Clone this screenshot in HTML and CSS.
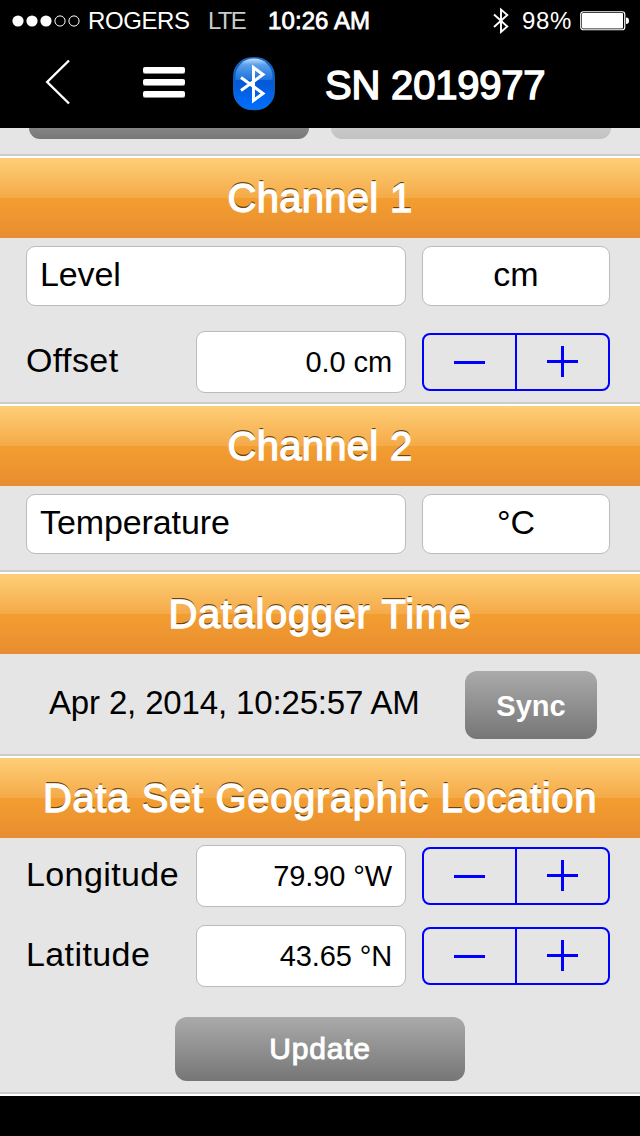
FILE: index.html
```html
<!DOCTYPE html>
<html lang="en">
<head>
    <meta charset="UTF-8">
    <meta name="viewport" content="width=device-width, initial-scale=1.0">
    <title>SN 2019977</title>
    <link rel="stylesheet" href="styles.css">
</head>
<body>

    <div class="status-bar">
        <svg class="signal" width="68" height="12" viewBox="0 0 68 12">
            <g fill="#fff">
                <circle cx="6" cy="6" r="5.6"/>
                <circle cx="20" cy="6" r="5.6"/>
                <circle cx="34" cy="6" r="5.6"/>
            </g>
            <g fill="none" stroke="#fff" stroke-width="1">
                <circle cx="48" cy="6" r="5.1"/>
                <circle cx="62" cy="6" r="5.1"/>
            </g>
        </svg>
        <span class="carrier">ROGERS</span>
        <span class="network">LTE</span>
        <span class="clock">10:26 AM</span>
        <svg class="bt-small" width="16" height="28" viewBox="0 0 16 28">
            <path d="M1 7.5 L14.3 19.5 L8 25 L8 2.5 L14.3 8 L1 20" fill="none" stroke="#fff" stroke-width="1.9"/>
        </svg>
        <span class="percent">98%</span>
        <svg class="battery" width="50" height="20" viewBox="0 0 50 20">
            <rect x=".75" y=".75" width="44" height="18" rx="2.5" fill="none" stroke="#fff" stroke-width="1.2"/>
            <rect x="2" y="2" width="41" height="15.5" rx="1" fill="#fff"/>
            <path d="M46 6.5 Q49 6.5 49 9.8 Q49 13 46 13 Z" fill="#fff"/>
        </svg>
    </div>

    <div class="nav-bar">
        <svg class="back" width="26" height="46" viewBox="0 0 26 46">
            <path d="M24 1.5 L2.2 23 L24 44.5" fill="none" stroke="#fff" stroke-width="2.4"/>
        </svg>
        <div class="menu">
            <span></span>
            <span></span>
            <span></span>
        </div>
        <svg class="bt-logo" width="42" height="54" viewBox="0 0 42 54">
            <defs>
                <linearGradient id="btBlue" x1="0" y1="0" x2="0" y2="1">
                    <stop offset="0" stop-color="#1560c0"/>
                    <stop offset=".5" stop-color="#0459d8"/>
                    <stop offset="1" stop-color="#0070ff"/>
                </linearGradient>
                <linearGradient id="btShine" x1="0" y1="0" x2="0" y2="1">
                    <stop offset="0" stop-color="#c4defa"/>
                    <stop offset=".3" stop-color="#5a9fea"/>
                    <stop offset="1" stop-color="#1d72dc"/>
                </linearGradient>
            </defs>
            <rect x=".7" y=".7" width="40.6" height="52" rx="18" fill="url(#btBlue)" stroke="#1c6cc4" stroke-width="1"/>
            <path d="M2.5 23 V19 A18.5 17.5 0 0 1 39.5 19 V23 Z" fill="url(#btShine)"/>
            <path d="M8 20.5 L30 36.5 L20.5 43.5 L20.5 10.5 L30 17.5 L8 33.5" fill="none" stroke="#fff" stroke-width="3"/>
        </svg>
        <h1>SN 2019977</h1>
    </div>

    <div class="tabs">
        <div class="tab"></div>
        <div class="tab tab-light"></div>
    </div>

    <h2>Channel 1</h2>
    <div class="panel channel-one">
        <div class="row">
            <div class="field name">Level</div>
            <div class="field unit">cm</div>
        </div>
        <div class="row value-row">
            <label>Offset</label>
            <div class="field value">0.0 cm</div>
            <div class="stepper">
                <button class="minus"></button>
                <button class="plus"></button>
            </div>
        </div>
    </div>

    <h2>Channel 2</h2>
    <div class="panel channel-two">
        <div class="row">
            <div class="field name">Temperature</div>
            <div class="field unit">°C</div>
        </div>
    </div>

    <h2 class="wide">Datalogger Time</h2>
    <div class="panel time">
        <span class="date">Apr 2, 2014, 10:25:57 AM</span>
        <button class="btn sync">Sync</button>
    </div>

    <h2 class="wide">Data Set Geographic Location</h2>
    <div class="panel location">
        <div class="row value-row">
            <label>Longitude</label>
            <div class="field value">79.90 °W</div>
            <div class="stepper">
                <button class="minus"></button>
                <button class="plus"></button>
            </div>
        </div>
        <div class="row value-row">
            <label>Latitude</label>
            <div class="field value">43.65 °N</div>
            <div class="stepper">
                <button class="minus"></button>
                <button class="plus"></button>
            </div>
        </div>
        <button class="btn update">Update</button>
    </div>

</body>
</html>
```
FILE: styles.css
```css
* {
    box-sizing: border-box;
}
body {
    margin: 0;
    width: 640px;
    height: 1136px;
    overflow: hidden;
    background-color: #000;
    color: #000;
    font-family: "Liberation Sans", Arial, sans-serif;
}
button {
    margin: 0;
    padding: 0;
    border: none;
    background: none;
    font-family: inherit;
}

/* status bar */
.status-bar {
    display: flex;
    align-items: center;
    height: 40px;
    padding: 1px 0 0 12px;
    color: #fff;
    font-size: 24px;
    white-space: nowrap;
}
.status-bar svg {
    flex: none;
}
.carrier {
    width: 120px;
    padding-left: 8px;
    letter-spacing: -0.4px;
}
.network {
    width: 67px;
    padding-left: 8px;
    letter-spacing: -1.8px;
    color: #ccc;
}
.clock {
    width: 226px;
    padding-left: 1px;
    letter-spacing: 0.1px;
    -webkit-text-stroke: 0.8px #fff;
}
.percent {
    width: 58px;
    margin-left: 13px;
    letter-spacing: 0.6px;
}

/* navigation */
.nav-bar {
    display: flex;
    align-items: center;
    height: 88px;
    padding: 0 0 4px 45px;
    color: #fff;
}
.back {
    margin-top: 0;
}
.menu {
    display: flex;
    flex-direction: column;
    gap: 6px;
    width: 42px;
    margin: 0 48px 0 72px;
}
.menu span {
    height: 6px;
    border-radius: 2px;
    background-color: #fff;
    box-shadow: 0 1px 0 #888;
}
.bt-logo {
    margin-top: 4px;
}
h1 {
    margin: 7px 0 0 50px;
    font-size: 40px;
    font-weight: normal;
    letter-spacing: -0.2px;
    -webkit-text-stroke: 1.5px #fff;
}

/* bottom edge of the scrolled tabs */
.tabs {
    display: flex;
    gap: 22px;
    height: 30px;
    padding-left: 29px;
    background-color: #e5e5e5;
    border-bottom: 2px solid #fff;
    box-shadow: inset 0 -2px 0 #ccc;
}
.tab {
    width: 280px;
    height: 11px;
    border-radius: 0 0 12px 12px;
    background: linear-gradient(#858585, #777);
}
.tab-light {
    background: linear-gradient(#c9c9c9, #c2c2c2);
}

h2 {
    height: 80px;
    margin: 0;
    background: linear-gradient(#ffcf78 0%, #f4aa48 50%, #f39e30 50%, #e88d30 100%);
    color: #fff;
    font-size: 40px;
    font-weight: normal;
    line-height: 81px;
    letter-spacing: 0.3px;
    text-align: center;
    text-shadow: 0 -2px 0 #6b4510;
    -webkit-text-stroke: 1.3px #fff;
}
.wide {
    letter-spacing: 0.65px;
}

.panel {
    background-color: #e5e5e5;
    border-bottom: 2px solid #fff;
    box-shadow: inset 0 -2px 0 #ccc;
}
.channel-one {
    height: 168px;
    padding: 8px 0 0 26px;
}
.channel-two {
    height: 88px;
    padding: 8px 0 0 26px;
}
.row {
    display: flex;
    gap: 16px;
}
.value-row {
    gap: 0;
    height: 62px;
}
.channel-one .value-row {
    margin-top: 25px;
}
.field {
    height: 60px;
    border: 1px solid #bbb;
    border-radius: 9px;
    background-color: #fff;
    font-size: 34px;
    line-height: 55px;
}
.name {
    width: 380px;
    padding-left: 13px;
    letter-spacing: -0.1px;
}
.unit {
    width: 188px;
    text-align: center;
}
label {
    width: 170px;
    font-size: 34px;
    line-height: 58px;
    letter-spacing: 0.4px;
}
.value {
    width: 210px;
    height: 62px;
    margin-right: 16px;
    padding-right: 13px;
    font-size: 29px;
    line-height: 61px;
    letter-spacing: -0.1px;
    text-align: right;
}

.stepper {
    display: flex;
    width: 188px;
    height: 58px;
    margin-top: 2px;
    border: 2px solid #00f;
    border-radius: 8px;
}
.stepper button {
    width: 93px;
}
.minus {
    background: linear-gradient(#00f, #00f) 30px 26px / 31px 3px no-repeat;
}
.stepper .minus {
    width: 91px;
}
.stepper .plus {
    border-left: 2px solid #00f;
    background:
        linear-gradient(#00f, #00f) 30px 25px / 31px 3px no-repeat,
        linear-gradient(#00f, #00f) 44px 11px / 3px 31px no-repeat;
}

.btn {
    border-radius: 12px;
    background: linear-gradient(#aaa, #767676);
    color: #fff;
}
.time {
    display: flex;
    height: 104px;
    padding: 17px 0 0 49px;
}
.date {
    width: 416px;
    font-size: 33px;
    line-height: 64px;
    letter-spacing: -0.15px;
}
.sync {
    width: 132px;
    height: 68px;
    padding-top: 2px;
    font-size: 29px;
    font-weight: bold;
}

.location {
    height: 258px;
    padding: 7px 0 0 26px;
}
.location .value-row {
    margin-bottom: 18px;
}
.update {
    display: block;
    width: 290px;
    height: 64px;
    margin: 30px 0 0 149px;
    font-size: 30px;
    letter-spacing: 0.8px;
    -webkit-text-stroke: 1px #fff;
}
```
